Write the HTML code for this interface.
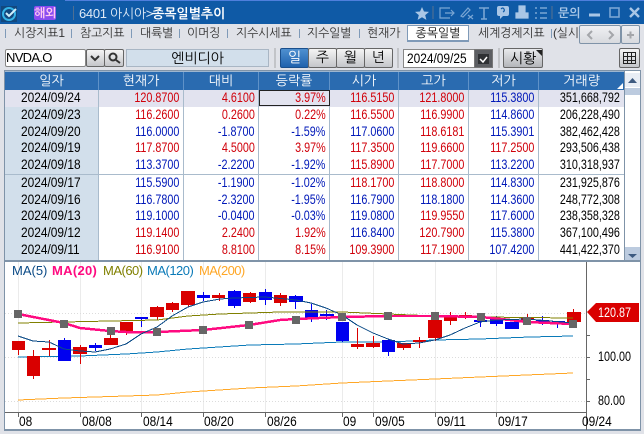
<!DOCTYPE html>
<html><head><meta charset="utf-8"><style>
html,body{margin:0;padding:0}
body{width:644px;height:434px;overflow:hidden;position:relative;background:#e0e2e8;font-family:"Liberation Sans","NanumGothic","Noto Sans CJK KR",sans-serif;font-size:13px;color:#000}
.a{position:absolute;white-space:nowrap}
.t{position:absolute;top:25px;height:17px;line-height:17px;color:#333;font-size:12px;letter-spacing:-.2px;white-space:nowrap}
.s{position:absolute;top:29px;width:1px;height:9px;background:#7f9ab8}
.btn{position:absolute;box-sizing:border-box;border:1px solid #666;text-align:center;background:linear-gradient(#f4f4f4,#c4c6ca);border-radius:2px}
.sep{position:absolute;top:48px;width:2px;height:20px;background:#c2c4c8}
.r{position:absolute;left:5px;width:619px;height:17px;line-height:15px}
.r span{position:absolute;top:0;font-size:14px;transform:scaleX(.77);transform-origin:100% 50%;white-space:nowrap}
.r span.d{left:16px;color:#000;transform:scaleX(.85);transform-origin:0 50%}
.c2{right:444.5px}.c3{right:369.5px}.c4{right:298.5px}.c5{right:229.5px}.c6{right:159.5px}.c7{right:89.5px}.c8{right:4.5px}
.R{color:#d0000a}.B{color:#0018b8}
.h{position:absolute;top:72px;height:18px;line-height:18px;text-align:center;color:#fff;font-size:13px;background:#2a6bb0;border-right:1px solid #5f92c8;box-sizing:border-box}
.v{position:absolute;top:90px;width:1px;height:170px;background:#a9bbcc}
.l{position:absolute;top:413px;line-height:16px;font-size:14px;transform:scaleX(.85);transform-origin:0 50%;white-space:nowrap}
.p{position:absolute;line-height:16px;font-size:14px;transform:scaleX(.77);transform-origin:0 50%;white-space:nowrap}
.m{position:absolute;top:263px;line-height:16px;font-size:13px;white-space:nowrap}
</style></head><body>

<!-- title bar -->
<div class="a" style="left:0;top:0;width:644px;height:24px;background:#0f5aa6"></div>
<div class="a" style="left:65px;top:0;width:579px;height:1px;background:#4f7fdc"></div>
<svg class="a" style="left:0;top:4px" width="20" height="20" viewBox="0 0 20 20">
<rect x="1" y="2" width="16" height="16" fill="#12487e"/>
<circle cx="9" cy="10" r="6" fill="none" stroke="#35b4e8" stroke-width="2"/>
<path d="M6 9l3 3 7-7" fill="none" stroke="#cfeefc" stroke-width="2"/>
</svg>
<div class="a" style="left:34px;top:6px;width:22px;height:14px;background:#8a4cf0;color:#ffc8f0;font-weight:bold;font-size:12px;line-height:14px;text-align:center;border-radius:2px">해외</div>
<div class="a" style="left:73px;top:6px;width:1px;height:14px;background:#4d6f94"></div>
<div class="a" style="left:79px;top:5px;line-height:17px;color:#dfeaf6;font-size:13px;letter-spacing:-.3px">6401 아시아&gt;</div>
<div class="a" style="left:152px;top:5px;line-height:17px;color:#fff;font-size:13px;font-weight:bold">종목일별추이</div>
<svg class="a" style="left:410px;top:0" width="234" height="24" viewBox="410 0 234 24" fill="none" stroke="#7aa6d4" stroke-width="1.2">
<path d="M422 7l2 4.500 5 .4-3.800 3.200 1.200 4.800-4.400-2.600-4.400 2.600 1.200-4.800-3.800-3.200 5-.4z" fill="#a9c6e6" stroke="none"/>
<path d="M433 6v13" stroke="#4d6f94"/>
<path d="M450 8h-10v10h10M445 13h9M451 10l3 3-3 3"/>
<path d="M461 16l7-8 2 2-7 7zM468 15l5 4M473 15l-5 4"/>
<path d="M479 8h10M484 8v11M481 19h6" stroke-width="1.600"/>
<path d="M497 8q0-2 2-2h8q2 0 2 2v6q0 2-2 2h-4l-3 3v-3h-1q-2 0-2-2z" fill="#a9c6e6" stroke="none"/>
<path d="M501 9q2-2 3 0t-1 3" stroke="#0f5aa6"/>
<path d="M519 6h6v6h-6zM516 13h12v5h-12z" fill="#a9c6e6" stroke="#a9c6e6"/>
<path d="M535 8h2M535 13h2M535 18h2M540 8h7M540 13h7M540 18h7" stroke-width="1.600"/>
<path d="M552 6v13" stroke="#4d6f94"/>
<path d="M589 15h11" stroke-width="3" stroke="#a9c6e6"/>
<rect x="610" y="8" width="9" height="9" stroke-width="1.600"/>
<path d="M630 8l9 9M639 8l-9 9" stroke-width="2.400" stroke="#a9c6e6"/>
</svg>
<div class="a" style="left:558px;top:5px;line-height:17px;color:#a9c6e6;font-weight:bold;font-size:12px">문의</div>

<!-- tabs -->
<div class="s" style="left:5px"></div><div class="t" style="left:14px">시장지표1</div>
<div class="s" style="left:71px"></div><div class="t" style="left:80px">참고지표</div>
<div class="s" style="left:131px"></div><div class="t" style="left:140px">대륙별</div>
<div class="s" style="left:179px"></div><div class="t" style="left:187px">이머징</div>
<div class="s" style="left:227px"></div><div class="t" style="left:236px">지수시세표</div>
<div class="s" style="left:299px"></div><div class="t" style="left:307px">지수일별</div>
<div class="s" style="left:359px"></div><div class="t" style="left:367px">현재가</div>
<div class="a" style="left:407px;top:25px;width:62px;height:17px;box-sizing:border-box;background:#fff;border:1px solid #7f9ab8;border-bottom:2px solid #7f9ab8;text-align:center;line-height:15px;color:#111;font-size:12px">종목일별</div>
<div class="t" style="left:478px">세계경제지표</div>
<div class="s" style="left:551px"></div><div class="t" style="left:553px;width:26px;overflow:hidden">(실시간</div>
<div class="a" style="left:579px;top:25px;width:42px;height:19px;box-sizing:border-box;border:1px solid #7f93a8;background:linear-gradient(#eff0f3,#d8dade);border-radius:2px"></div>
<div class="a" style="left:621px;top:25px;width:19px;height:19px;box-sizing:border-box;border:1px solid #7f93a8;background:linear-gradient(#eff0f3,#d8dade);border-radius:2px"></div>
<svg class="a" style="left:579px;top:25px" width="61" height="19" viewBox="0 0 61 19" fill="none" stroke="#a4a6aa" stroke-width="2">
<path d="M13 6l-4 4 4 4M30 6l4 4-4 4"/><path d="M48 10h7M51.500 6.500v7"/>
</svg>

<!-- toolbar -->
<div class="a" style="left:5px;top:49px;width:81px;height:18px;box-sizing:border-box;background:#fff;border:1px solid #888;line-height:16px;letter-spacing:-.7px;border-radius:2px">NVDA.O</div>
<div class="btn" style="left:86px;top:49px;width:19px;height:18px"></div>
<div class="btn" style="left:104px;top:49px;width:20px;height:18px"></div>
<svg class="a" style="left:86px;top:49px" width="38" height="18" viewBox="0 0 38 18" fill="none" stroke="#333" stroke-width="2">
<path d="M5 7l4 4 4-4"/><circle cx="27" cy="8" r="3.500"/><path d="M30 11l4 3"/>
</svg>
<div class="a" style="left:126px;top:49px;width:143px;height:18px;box-sizing:border-box;background:#d2dfeb;border:1px solid #a9b6c4;text-align:center;line-height:16px;font-size:14px">엔비디아</div>
<div class="sep" style="left:274px"></div>
<div class="btn" style="left:280px;top:48px;width:29px;height:20px;background:linear-gradient(#4f90d0,#1f62ad);border-color:#1a4f8c;color:#fff;line-height:17px;font-size:14px">일</div>
<div class="btn" style="left:308px;top:48px;width:29px;height:20px;line-height:17px;font-size:14px">주</div>
<div class="btn" style="left:336px;top:48px;width:29px;height:20px;line-height:17px;font-size:14px">월</div>
<div class="btn" style="left:364px;top:48px;width:29px;height:20px;line-height:17px;font-size:14px">년</div>
<div class="sep" style="left:397px"></div>
<div class="a" style="left:403px;top:49px;width:72px;height:19px;box-sizing:border-box;background:#fff;border:1px solid #888"></div>
<div class="l" style="left:407px;top:50px">2024/09/25</div>
<div class="a" style="left:474px;top:49px;width:19px;height:19px;box-sizing:border-box;background:#5c5e62;border:1px solid #777"></div>
<svg class="a" style="left:474px;top:49px" width="19" height="19" viewBox="0 0 19 19" fill="none">
<rect x="4" y="5" width="11" height="10" fill="#2f3134"/><path d="M6 10l3 3 4-5" stroke="#fff" stroke-width="1.500"/>
</svg>
<div class="sep" style="left:498px"></div>
<div class="btn" style="left:503px;top:48px;width:40px;height:20px;line-height:18px;font-size:14px;background:linear-gradient(#e8e9ec,#b4b6ba)">시황</div>
<svg class="a" style="left:536px;top:50px" width="6" height="6"><path d="M0 0h6v6z" fill="#222"/></svg>
<div class="btn" style="left:619px;top:48px;width:21px;height:20px"></div>
<svg class="a" style="left:619px;top:48px" width="21" height="20" viewBox="0 0 21 20" fill="none" stroke="#222" shape-rendering="crispEdges">
<rect x="4.500" y="4.500" width="12" height="11"/><path d="M4 8.500h13M4 12.500h13M8.500 4v11M12.500 4v11"/>
</svg>

<!-- table -->
<div class="a" style="left:4px;top:70px;width:637px;height:191px;box-sizing:border-box;border:1px solid #7f93a8;border-bottom:0;background:#fff"></div>
<div class="a" style="left:5px;top:71px;width:619px;height:1px;background:#9db6d0"></div>
<div class="h" style="left:5px;width:94px">일자</div>
<div class="h" style="left:99px;width:85px">현재가</div>
<div class="h" style="left:184px;width:75px">대비</div>
<div class="h" style="left:259px;width:71px">등락률</div>
<div class="h" style="left:330px;width:69px">시가</div>
<div class="h" style="left:399px;width:70px">고가</div>
<div class="h" style="left:469px;width:70px">저가</div>
<div class="h" style="left:539px;width:85px;border-right:0">거래량</div>
<svg class="a" style="left:617px;top:83px" width="6" height="6"><path d="M6 0v6h-6z" fill="#fff"/></svg>
<div class="a" style="left:5px;top:90px;width:93px;height:170px;background:#d2dfeb"></div>
<div class="a" style="left:5px;top:90px;width:619px;height:17px;background:#e2e3ef"></div>
<div class="v" style="left:98px"></div><div class="v" style="left:183px"></div><div class="v" style="left:258px"></div><div class="v" style="left:329px"></div><div class="v" style="left:398px"></div><div class="v" style="left:468px"></div><div class="v" style="left:538px"></div>
<div class="a" style="left:5px;top:174px;width:619px;height:1px;background:#a9bbcc"></div>
<div class="a" style="left:259px;top:90px;width:71px;height:16px;box-sizing:border-box;border:1px solid #222"></div>

<div class="r" style="top:90px"><span class="d">2024/09/24</span><span class="c2 R">120.8700</span><span class="c3 R">4.6100</span><span class="c4 R">3.97%</span><span class="c5 R">116.5150</span><span class="c6 R">121.8000</span><span class="c7 B">115.3800</span><span class="c8">351,668,792</span></div>
<div class="r" style="top:107px"><span class="d">2024/09/23</span><span class="c2 R">116.2600</span><span class="c3 R">0.2600</span><span class="c4 R">0.22%</span><span class="c5 R">116.5500</span><span class="c6 R">116.9900</span><span class="c7 B">114.8600</span><span class="c8">206,228,490</span></div>
<div class="r" style="top:124px"><span class="d">2024/09/20</span><span class="c2 B">116.0000</span><span class="c3 B">-1.8700</span><span class="c4 B">-1.59%</span><span class="c5 B">117.0600</span><span class="c6 R">118.6181</span><span class="c7 B">115.3901</span><span class="c8">382,462,428</span></div>
<div class="r" style="top:140px"><span class="d">2024/09/19</span><span class="c2 R">117.8700</span><span class="c3 R">4.5000</span><span class="c4 R">3.97%</span><span class="c5 R">117.3500</span><span class="c6 R">119.6600</span><span class="c7 R">117.2500</span><span class="c8">293,506,438</span></div>
<div class="r" style="top:157px"><span class="d">2024/09/18</span><span class="c2 B">113.3700</span><span class="c3 B">-2.2200</span><span class="c4 B">-1.92%</span><span class="c5 R">115.8900</span><span class="c6 R">117.7000</span><span class="c7 B">113.2200</span><span class="c8">310,318,937</span></div>
<div class="r" style="top:175px"><span class="d">2024/09/17</span><span class="c2 B">115.5900</span><span class="c3 B">-1.1900</span><span class="c4 B">-1.02%</span><span class="c5 R">118.1700</span><span class="c6 R">118.8000</span><span class="c7 B">114.8300</span><span class="c8">231,925,876</span></div>
<div class="r" style="top:192px"><span class="d">2024/09/16</span><span class="c2 B">116.7800</span><span class="c3 B">-2.3200</span><span class="c4 B">-1.95%</span><span class="c5 B">116.7900</span><span class="c6 B">118.1800</span><span class="c7 B">114.3600</span><span class="c8">248,772,308</span></div>
<div class="r" style="top:208px"><span class="d">2024/09/13</span><span class="c2 B">119.1000</span><span class="c3 B">-0.0400</span><span class="c4 B">-0.03%</span><span class="c5 B">119.0800</span><span class="c6 R">119.9550</span><span class="c7 B">117.6000</span><span class="c8">238,358,328</span></div>
<div class="r" style="top:225px"><span class="d">2024/09/12</span><span class="c2 R">119.1400</span><span class="c3 R">2.2400</span><span class="c4 R">1.92%</span><span class="c5 B">116.8400</span><span class="c6 R">120.7900</span><span class="c7 B">115.3800</span><span class="c8">367,100,496</span></div>
<div class="r" style="top:242px"><span class="d">2024/09/11</span><span class="c2 R">116.9100</span><span class="c3 R">8.8100</span><span class="c4 R">8.15%</span><span class="c5 R">109.3900</span><span class="c6 R">117.1900</span><span class="c7 B">107.4200</span><span class="c8">441,422,370</span></div>

<!-- scrollbar -->
<div class="a" style="left:624px;top:71px;width:1px;height:190px;background:#7f93a8"></div>
<div class="a" style="left:625px;top:73px;width:15px;height:14px;background:#e8edf5"></div>
<div class="a" style="left:625px;top:88px;width:15px;height:7px;background:#bccbdf"></div>
<div class="a" style="left:625px;top:247px;width:15px;height:13px;background:#bccbdf"></div>
<svg class="a" style="left:625px;top:73px" width="15" height="188"><path d="M3 10l4.500-5 4.500 5z" fill="#3d5a80"/><path d="M3 181l4.500 4 4.500-4z" fill="#3d5a80"/></svg>

<!-- chart -->
<div class="a" style="left:4px;top:260px;width:637px;height:171px;box-sizing:border-box;background:#fff;border:1px solid #7f93a8;border-top:2px solid #7f93a8;border-bottom:2px solid #7f93a8"></div>
<svg class="a" style="left:0;top:0" width="644" height="434" viewBox="0 0 644 434" fill="none">
<g stroke="#ebebeb" shape-rendering="crispEdges">
<path d="M18.500 262v150M80.500 262v150M141.500 262v150M203.500 262v150M265.500 262v150M342.500 262v150M373.500 262v150M435.500 262v150M496.500 262v150"/>
</g>
<g stroke="#dcdcdc" stroke-dasharray="1 2" shape-rendering="crispEdges">
<path d="M5 313.500h581M5 357.500h581M5 401.500h581"/>
</g>
<g stroke="#666" shape-rendering="crispEdges">
<path d="M5 412.500h581M586.500 262v168M18.500 412v5M80.500 412v5M141.500 412v5M203.500 412v5M265.500 412v5M342.500 412v5M373.500 412v5M435.500 412v5M496.500 412v5M586 335.500h4M586 357.500h4M586 379.500h4M586 401.500h4"/>
</g>
<polyline points="18,400 64,398 126,396 157,395 188,392 250,388 296,386 342,383 388,381 435,379 480,377 573,373" stroke="#ffa726" stroke-width="1" shape-rendering="crispEdges"/>
<polyline points="18,357 80,356 126,354 157,352 188,349 250,345 296,344 342,342 388,342 435,340 480,339 530,337 573,336" stroke="#0a7ab8" stroke-width="1" shape-rendering="crispEdges"/>
<g shape-rendering="crispEdges">
<g stroke="#d90000">
<path d="M18.500 341v14M33.500 350v29M49.500 340v16M80.500 345v19M110.500 335v10M126.500 322v13M157.500 306v14M172.500 302v10M188.500 291v16M219.500 293v8M250.500 292v11M280.500 293v13M357.500 328v21M373.500 336v12M403.500 343v7M419.500 337v11M435.500 320v21M450.500 312v13M465.500 312v7M527.500 314v10M573.500 309v13"/>
</g>
<g fill="#d90000">
<rect x="12" y="341" width="13" height="9"/><rect x="27" y="356" width="13" height="20"/><rect x="42" y="348" width="14" height="2"/><rect x="73" y="347" width="14" height="7"/><rect x="104" y="338" width="14" height="7"/><rect x="120" y="322" width="13" height="9"/><rect x="150" y="307" width="14" height="10"/><rect x="166" y="303" width="13" height="7"/><rect x="181" y="291" width="14" height="14"/><rect x="212" y="295" width="13" height="3"/><rect x="243" y="293" width="13" height="9"/><rect x="274" y="295" width="13" height="8"/><rect x="351" y="344" width="13" height="3"/><rect x="366" y="343" width="14" height="4"/><rect x="397" y="343" width="14" height="5"/><rect x="413" y="340" width="13" height="2"/><rect x="428" y="320" width="14" height="18"/><rect x="444" y="316" width="13" height="5"/><rect x="459" y="315" width="13" height="2"/><rect x="521" y="318" width="13" height="2"/><rect x="567" y="312" width="14" height="10"/>
</g>
<g stroke="#0000f0">
<path d="M64.500 338v23M95.500 343v8M141.500 317v10M203.500 292v9M234.500 290v18M265.500 289v16M295.500 295v14M311.500 304v18M326.500 310v10M342.500 322v20M388.500 339v17M480.500 315v12M496.500 316v10M542.500 316v9M557.500 321v7"/>
</g>
<g fill="#0000f0">
<rect x="58" y="340" width="13" height="21"/><rect x="89" y="345" width="13" height="3"/><rect x="135" y="317" width="13" height="2"/><rect x="197" y="295" width="13" height="3"/><rect x="228" y="291" width="13" height="15"/><rect x="259" y="292" width="13" height="8"/><rect x="289" y="296" width="14" height="6"/><rect x="305" y="310" width="13" height="9"/><rect x="320" y="314" width="14" height="2"/><rect x="336" y="322" width="13" height="19"/><rect x="382" y="340" width="13" height="12"/><rect x="474" y="320" width="13" height="2"/><rect x="490" y="318" width="13" height="6"/><rect x="505" y="322" width="14" height="7"/><rect x="536" y="320" width="13" height="3"/><rect x="552" y="321" width="13" height="3"/>
</g>
</g>
<polyline points="18,323 64,322 110,321 157,320 188,316 220,314 280,312 342,312 388,314 435,316 480,317 573,318" stroke="#808000" stroke-width="1" shape-rendering="crispEdges"/>
<polyline points="18,314 64,323 80,328 110,331 126,332 157,332 203,330 249,325 280,320 296,319 342,317 388,316 435,316 481,317 510,320 527,322 573,324" stroke="#ff0a80" stroke-width="2.500" shape-rendering="crispEdges"/>
<polyline points="18,336 33,341 49,342 64,349 80,351 95,352 110,349 126,344 141,334 157,327 172,316 188,307 203,302 220,299 234,298 265,297 296,300 311,303 326,308 342,315 357,325 373,333 388,339 403,344 419,343 435,340 450,335 465,328 480,322 496,320 527,319 573,323" stroke="#0a4a86" stroke-width="1" shape-rendering="crispEdges"/>
<g fill="#666" shape-rendering="crispEdges">
<rect x="14" y="310" width="8" height="8"/><rect x="60" y="320" width="8" height="8"/><rect x="107" y="327" width="8" height="8"/><rect x="153" y="328" width="8" height="8"/><rect x="199" y="326" width="8" height="8"/><rect x="245" y="321" width="8" height="8"/><rect x="292" y="316" width="8" height="8"/><rect x="338" y="313" width="8" height="8"/><rect x="384" y="312" width="8" height="8"/><rect x="431" y="312" width="8" height="8"/><rect x="477" y="313" width="8" height="8"/><rect x="523" y="317" width="8" height="8"/><rect x="569" y="320" width="8" height="8"/>
</g>
<path d="M587 312l9-9h43v19h-43z" fill="#d90000"/>
</svg>
<div class="m" style="left:12px;color:#0a4a86">MA(5)</div>
<div class="m" style="left:52px;font-weight:bold;letter-spacing:.3px;color:#ff0a80">MA(20)</div>
<div class="m" style="left:103px;letter-spacing:-.5px;color:#808000">MA(60)</div>
<div class="m" style="left:147px;letter-spacing:-.5px;color:#0a7ab8">MA(120)</div>
<div class="m" style="left:199px;letter-spacing:-.6px;color:#ffa726">MA(200)</div>
<div class="p" style="left:598px;top:304px;color:#fff">120.87</div>
<div class="p" style="left:598px;top:348px">100.00</div>
<div class="p" style="left:598px;top:392px">80.00</div>
<div class="l" style="left:19px">08</div>
<div class="l" style="left:82px">08/08</div>
<div class="l" style="left:143px">08/14</div>
<div class="l" style="left:204px">08/20</div>
<div class="l" style="left:267px">08/26</div>
<div class="l" style="left:343px">09</div>
<div class="l" style="left:375px">09/05</div>
<div class="l" style="left:437px">09/11</div>
<div class="l" style="left:498px">09/17</div>
<div class="l" style="left:582px">09/24</div>
</body></html>
